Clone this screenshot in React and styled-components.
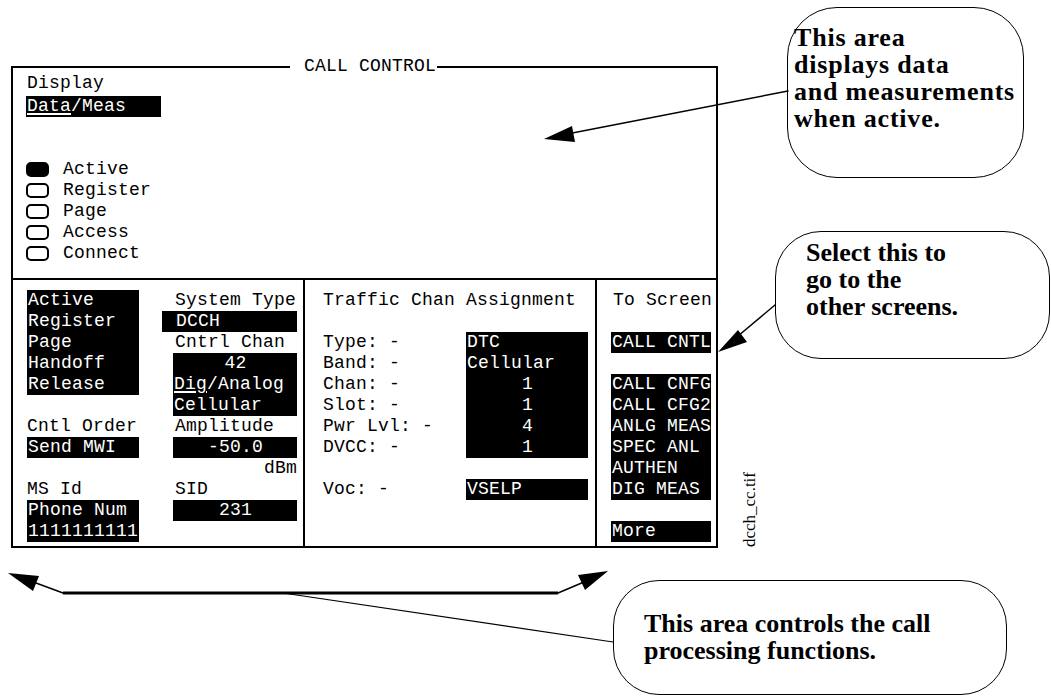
import React from 'react';
import styled, { createGlobalStyle } from 'styled-components';

export default function App() {
	return (
		<Page>
			<GlobalStyle />
			<Screen>
				<ScreenTitle>CALL CONTROL</ScreenTitle>

				<Upper>
					<Text>Display</Text>
					<DataBox><U>Data</U>/Meas</DataBox>

					<StatusList>
						<Status checked>Active</Status>
						<Status>Register</Status>
						<Status>Page</Status>
						<Status>Access</Status>
						<Status>Connect</Status>
					</StatusList>
				</Upper>

				<Lower>
					<ControlCol>
						<Stack $width="112px">
							<Hi>
								Active<br />Register<br />Page<br />Handoff<br />Release
							</Hi>
							<Text $skip={1}>Cntl Order</Text>
							<Hi>Send MWI</Hi>
							<Text $skip={1}>MS Id</Text>
							<Hi>Phone Num<br />1111111111</Hi>
						</Stack>

						<Stack $width="124px">
							<Text $pad="2px">System Type</Text>
							<Hi $out="11px" $pad="14px">DCCH</Hi>
							<Text $pad="2px">Cntrl Chan</Text>
							<Hi>
								<Line $align="center">42</Line>
								<Line><U>Dig</U>/Analog</Line>
								<Line>Cellular</Line>
							</Hi>
							<Text $pad="2px">Amplitude</Text>
							<Hi $align="center">-50.0</Hi>
							<Text $align="right">dBm</Text>
							<Text $pad="2px">SID</Text>
							<Hi $align="center">231</Hi>
						</Stack>
					</ControlCol>

					<TrafficCol>
						<Text>Traffic Chan Assignment</Text>
						<TrafficRow $skip={1}>
							<Labels>
								<Line>Type: -</Line>
								<Line>Band: -</Line>
								<Line>Chan: -</Line>
								<Line>Slot: -</Line>
								<Line>Pwr Lvl: -</Line>
								<Line>DVCC: -</Line>
							</Labels>
							<ValueBox>
								<Line>DTC</Line>
								<Line>Cellular</Line>
								<Line $align="center">1</Line>
								<Line $align="center">1</Line>
								<Line $align="center">4</Line>
								<Line $align="center">1</Line>
							</ValueBox>
						</TrafficRow>
						<TrafficRow $skip={1}>
							<Labels>
								<Line>Voc: -</Line>
							</Labels>
							<ValueBox>VSELP</ValueBox>
						</TrafficRow>
					</TrafficCol>

					<ScreensCol>
						<Text $pad="2px">To Screen</Text>
						<Hi $skip={1}>CALL CNTL</Hi>
						<Hi $skip={1}>
							CALL CNFG<br />CALL CFG2<br />ANLG MEAS<br />SPEC ANL<br />AUTHEN<br />DIG MEAS
						</Hi>
						<Hi $skip={1}>More</Hi>
					</ScreensCol>
				</Lower>
			</Screen>

			<FileTag>dcch_cc.tif</FileTag>

			<Callout $x="787px" $y="7px" $w="237px" $h="171px" $r="50px" $pad="16px 0 0 6px" $track="0.8px">
				This area<br />displays data<br />and measurements<br />when active.
			</Callout>
			<Callout $x="775px" $y="231px" $w="275px" $h="128px" $r="46px" $pad="7px 0 0 30px">
				Select this to<br />go to the<br />other screens.
			</Callout>
			<Callout $x="613px" $y="580px" $w="394px" $h="115px" $r="46px" $pad="29px 0 0 30px">
				This area controls the call<br />processing functions.
			</Callout>

			<Arrows />
		</Page>
	);
}


/* ELEMENTS */
function Status(props) {
	return (
		<StatusRow>
			<Check $on={props.checked} />
			<span>{props.children}</span>
		</StatusRow>
	);
}

function Arrows() {
	return (
		<Overlay viewBox="0 0 1051 696" width="1051" height="696">
			<g stroke="#000" fill="none" strokeLinecap="round">
				<line x1="788" y1="91" x2="562" y2="135" strokeWidth="1.5" />
				<line x1="775" y1="305" x2="738" y2="336" strokeWidth="1.5" />
				<line x1="36" y1="583" x2="63" y2="593" strokeWidth="1.5" />
				<line x1="63" y1="593" x2="558" y2="593" strokeWidth="3" strokeLinecap="butt" />
				<line x1="558" y1="593" x2="584" y2="582" strokeWidth="1.5" />
				<line x1="283" y1="593" x2="613" y2="642" strokeWidth="1.2" />
			</g>
			<g fill="#000">
				<polygon points="544,139 572,126 575,142" />
				<polygon points="718,352 738,330 747,342" />
				<polygon points="8,573 39,576 33,591" />
				<polygon points="608,571 578,575 585,590" />
			</g>
		</Overlay>
	);
}
/* END ELEMENTS */

/* STYLES */
const GlobalStyle = createGlobalStyle`
	html, body {
		margin: 0;
		background: #fff;
	}
	body {
		overflow: hidden;
	}
`;

const Page = styled.div`
	position: relative;
	width: 1051px;
	height: 696px;
	box-sizing: border-box;
	padding: 66px 0 0 11px;
	background: #fff;
	color: #000;
	font-family: 'Liberation Mono', 'DejaVu Sans Mono', monospace;
`;

const Screen = styled.div`
	position: relative;
	width: 707px;
	height: 482px;
	box-sizing: border-box;
	border: 2px solid #000;
	display: flex;
	flex-direction: column;
	font-size: 18px;
	letter-spacing: 0.2px;
	line-height: 21px;
	white-space: nowrap;
`;

const ScreenTitle = styled.div`
	position: absolute;
	top: -12px;
	left: 277px;
	padding: 0 1px 0 14px;
	background: #fff;
`;

const Upper = styled.div`
	flex: 0 0 205px;
	box-sizing: content-box;
	border-bottom: 2px solid #000;
	padding: 5px 0 0 14px;
	display: flex;
	flex-direction: column;
	align-items: flex-start;
`;

const Text = styled.div`
	margin-top: ${props => (props.$skip || 0) * 21}px;
	padding-left: ${props => props.$pad || '0'};
	text-align: ${props => props.$align || 'left'};
`;

const Line = styled.div`
	text-align: ${props => props.$align || 'left'};
`;

const U = styled.span`
	text-decoration: underline;
	text-decoration-thickness: 2px;
	text-underline-offset: 2px;
`;

const DataBox = styled.div`
	width: 135px;
	margin: 2px 0 0 -1px;
	padding-left: 1px;
	box-sizing: border-box;
	background: #000;
	color: #fff;
`;

const StatusList = styled.div`
	margin-top: 42px;
	display: flex;
	flex-direction: column;
`;

const StatusRow = styled.div`
	display: flex;
	align-items: center;
	gap: 14px;
	margin-left: -1px;
`;

const Check = styled.div`
	width: 23px;
	height: 15px;
	box-sizing: border-box;
	border: 2px solid #000;
	border-radius: 5px;
	background: ${props => (props.$on ? '#000' : '#fff')};
`;

const Lower = styled.div`
	flex: 1;
	display: grid;
	grid-template-columns: 292px 292px 1fr;
`;

const ControlCol = styled.div`
	border-right: 2px solid #000;
	padding: 10px 0 0 14px;
	display: flex;
	gap: 34px;
`;

const Stack = styled.div`
	width: ${props => props.$width};
	display: flex;
	flex-direction: column;
`;

const Hi = styled.div`
	margin-top: ${props => (props.$skip || 0) * 21}px;
	margin-left: ${props => (props.$out ? `-${props.$out}` : '0')};
	padding-left: ${props => props.$pad || '1px'};
	background: #000;
	color: #fff;
	text-align: ${props => props.$align || 'left'};
`;

const TrafficCol = styled.div`
	border-right: 2px solid #000;
	padding: 10px 0 0 18px;
	display: flex;
	flex-direction: column;
`;

const TrafficRow = styled.div`
	margin-top: ${props => (props.$skip || 0) * 21}px;
	display: flex;
`;

const Labels = styled.div`
	width: 143px;
`;

const ValueBox = styled.div`
	width: 122px;
	box-sizing: border-box;
	padding-left: 1px;
	background: #000;
	color: #fff;
`;

const ScreensCol = styled.div`
	padding: 10px 0 0 14px;
	display: flex;
	flex-direction: column;
	align-items: flex-start;

	& > div {
		width: 100px;
		box-sizing: border-box;
	}
`;

const Callout = styled.div`
	position: absolute;
	left: ${props => props.$x};
	top: ${props => props.$y};
	width: ${props => props.$w};
	height: ${props => props.$h};
	box-sizing: border-box;
	padding: ${props => props.$pad};
	border: 1.5px solid #000;
	border-radius: ${props => props.$r};
	background: #fff;
	font-family: 'Liberation Serif', 'Times New Roman', serif;
	font-weight: bold;
	font-size: 26px;
	letter-spacing: ${props => props.$track || '0'};
	line-height: 27px;
	white-space: nowrap;
`;

const FileTag = styled.div`
	position: absolute;
	left: 741px;
	top: 472px;
	writing-mode: vertical-rl;
	transform: rotate(180deg);
	font-family: 'Liberation Serif', 'Times New Roman', serif;
	font-size: 17px;
	line-height: 17px;
`;

const Overlay = styled.svg`
	position: absolute;
	left: 0;
	top: 0;
	pointer-events: none;
`;
/* END STYLES */
